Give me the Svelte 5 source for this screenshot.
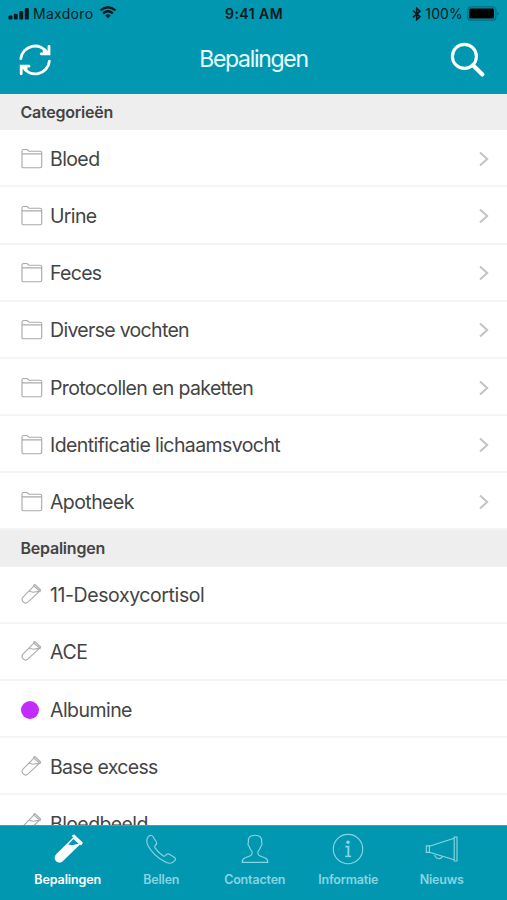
<script>
  const categories = [
    { label: 'Bloed', ls: -0.6 },
    { label: 'Urine', ls: -0.65 },
    { label: 'Feces', ls: -0.7 },
    { label: 'Diverse vochten', ls: -0.69 },
    { label: 'Protocollen en paketten', ls: -0.64 },
    { label: 'Identificatie lichaamsvocht', ls: -0.59 },
    { label: 'Apotheek', ls: -0.58 }
  ];
  const tests = [
    { label: '11-Desoxycortisol', ls: -0.41 },
    { label: 'ACE', ls: -0.35 },
    { label: 'Albumine', ls: -0.55, dot: true },
    { label: 'Base excess', ls: -0.68 },
    { label: 'Bloedbeeld', ls: -0.6 }
  ];
  const tabs = ['Bepalingen', 'Bellen', 'Contacten', 'Informatie', 'Nieuws'];
</script>

<div class="screen">
  <header>
    <div class="status">
      <div class="carrier">
        <svg width="22" height="14" viewBox="0 0 22 14"><rect x="0.5" y="8.5" width="3.9" height="4" rx="1"/><rect x="5.8" y="6.7" width="3.9" height="5.8" rx="1"/><rect x="11.2" y="4" width="4" height="8.5" rx="1"/><rect x="16.8" y="1" width="4" height="11.5" rx="1"/></svg>
        <span>Maxdoro</span>
        <svg class="wifi" width="18" height="13" viewBox="0 0 18 13"><path d="M1.5 4.4Q9-2 16.5 4.4M4.2 7.4Q9 3.2 13.8 7.4" fill="none" stroke="#06191d" stroke-width="2.3"/><path d="M6.3 9.4Q9 7 11.7 9.4L9 12.3Z"/></svg>
      </div>
      <span class="time">9:41 AM</span>
      <div class="power">
        <svg width="10" height="14" viewBox="0 0 10 14"><path d="M1 3.7 8 9.8 4.7 12.7V1.3L8 4.2 1 10.3" fill="none" stroke="#06191d" stroke-width="1.6"/></svg>
        <span>100%</span>
        <svg class="battery" width="33" height="15" viewBox="0 0 33 15"><rect x="0.8" y="0.8" width="28" height="13.4" rx="3" fill="none" stroke="#046d80" stroke-width="1.3"/><rect x="2.3" y="2.6" width="24.7" height="9.8" rx="1.2" fill="#000"/><path d="M30.2 5.5q3 2 0 4z" fill="#046d80"/></svg>
      </div>
    </div>
    <div class="nav">
      <svg width="34" height="34" viewBox="0 0 34 34" fill="none" stroke="#fff" stroke-width="2.8" stroke-linecap="round"><path d="M2.8 15.6A14.3 14.3 0 0 1 29.4 10.2M31.4 18.2A14.3 14.3 0 0 1 4.8 23.8"/><path d="M31 3.4V10.8H23.2M30.4 10.4 26 8.2M3.2 30.8V23.2H11M3.8 23.6 8.2 25.8"/></svg>
      <h1>Bepalingen</h1>
      <svg width="36" height="36" viewBox="0 0 36 36" fill="none" stroke="#fff"><circle cx="14.4" cy="14.4" r="12" stroke-width="3.1"/><path d="M23 23.2 32.4 32.4" stroke-width="4.2" stroke-linecap="round"/></svg>
    </div>
  </header>

  <main>
    <h2>Categorieën</h2>
    {#each categories as row}
      <div class="row">
        <svg class="icon" width="22" height="22" viewBox="0 0 22 22" fill="none" stroke="#ababab" stroke-width="1.15"><path d="M1 18.5V3.2Q1 1.5 2.6 1.5H6L8 3.2H19.2Q20.7 3.2 20.7 4.7V18.3Q20.7 19.7 19.2 19.7H2.5Q1 19.7 1 18.2M1 5.9H20.7"/></svg>
        <span style="letter-spacing:{row.ls}px">{row.label}</span>
        <svg class="chevron" width="12" height="16" viewBox="0 0 12 16"><path d="M2 1.5 9.2 8 2 14.5" fill="none" stroke="#c3c3c3" stroke-width="2"/></svg>
      </div>
    {/each}
    <h2>Bepalingen</h2>
    {#each tests as row}
      <div class="row">
        {#if row.dot}
          <span class="icon dot"></span>
        {:else}
          <svg class="icon" width="22" height="22" viewBox="0 0 22 22" fill="none" stroke="#adadad" stroke-width="1.15"><path d="M12.8 2.1 2 13.2C-.6 16.4 3.6 20.8 6.8 18.1L18.4 7.3M12.7 1.1 14 .6 19.6 6 19 7.5 12.6 1.7ZM8.2 7.3 12 8.2 18 7.4"/></svg>
        {/if}
        <span style="letter-spacing:{row.ls}px">{row.label}</span>
      </div>
    {/each}
  </main>

  <nav class="tabs">
    {#each tabs as tab, i}
      <div class="tab" class:active={i === 0}>
        <svg width="36" height="34" viewBox="0 0 36 34" fill="none" stroke="currentColor" stroke-width="1.15">
          {#if i === 0}
            <path d="M23.2 4.5 6.4 20.9C1.5 25.8 8.2 32.6 13 28L30 11.5Z" fill="currentColor" stroke="none"/>
            <path d="M22.6 3 24 2 32.2 9.9 31 11.5Z" fill="currentColor"/>
            <path d="M23.4 6 18.4 11.4Q22 12.6 25 11.5L29 10.7Z" fill="#0297b1" stroke="none"/>
            <path d="m25 6.4 4 3.8" stroke-width="1.2"/>
          {:else if i === 1}
            <path d="M5.8 3.2C7.4 1.8 8.8 2 9.8 3.5L13.3 8.8C14.5 10.7 13.3 11.5 12.2 12.5Q11 13.5 12.2 15.1Q15.4 19.7 20 22.7Q21.4 23.7 22.6 22.4C24 20.6 25 20.2 26.8 21.4L31.2 24.3C33 25.5 32.8 26.7 31.3 28.2Q27.3 32.1 21.5 28.6Q9.8 21.8 5 12.4Q2.2 6.8 5.8 3.2Z"/>
          {:else if i === 2}
            <path d="M18 2.2C13 2.2 11 4.5 11.4 9.5Q10.2 11.5 12.4 13.8Q13 16.2 14.4 17.6C15.8 19 15 22 13.4 22.7L8.3 24.8Q5 26 5.2 29.4H30.8Q31 26 27.7 24.8L22.6 22.7C21 22 20.2 19 21.6 17.6Q23 16.2 23.6 13.8Q25.8 11.5 24.6 9.5C25 4.5 23 2.2 18 2.2Z"/>
          {:else if i === 3}
            <circle cx="18" cy="16" r="14.7"/>
            <circle cx="18" cy="9.2" r="1.8" fill="currentColor" stroke="none"/>
            <path d="M15.4 13.6H18.4V23" stroke-width="1.9"/>
            <path d="M15.2 23.4H21.2" stroke-width="1.5"/>
          {:else}
            <path d="M2.3 12.8H5.4V19.4H2.3ZM5.4 13.2 30.2 5.2M5.4 19.2 30.2 26.8M30.2 4.1H33V28H30.2ZM10.5 20.7C10.9 26.5 17.3 26.8 18.3 23.1"/>
          {/if}
        </svg>
        <span>{tab}</span>
      </div>
    {/each}
  </nav>
</div>

<style>
  :global(body) { margin: 0; }
  .screen {
    width: 507px;
    height: 900px;
    display: flex;
    flex-direction: column;
    overflow: hidden;
    background: #fff;
    color: #444;
    font-family: Inter, "Liberation Sans", sans-serif;
  }
  header { flex: none; height: 94px; background: #0297b1; }
  .status {
    height: 28px;
    box-sizing: border-box;
    padding: 0 7px 1px 8px;
    display: grid;
    grid-template-columns: 1fr auto 1fr;
    align-items: center;
    color: #06191d;
    fill: #06191d;
    font-size: 14px;
  }
  .carrier, .power { display: flex; align-items: center; }
  .carrier span { margin-left: 3px; letter-spacing: 0.3px; }
  .wifi { margin-left: 6px; margin-top: -2px; }
  .time { font-weight: 600; letter-spacing: 0.45px; }
  .power { justify-content: flex-end; }
  .power span { margin: 0 4px 0 3px; letter-spacing: 0.15px; }
  .nav {
    height: 64px;
    padding: 0 21px 0 18px;
    display: flex;
    align-items: center;
    justify-content: space-between;
  }
  h1 { margin: -2px 0 0 5px; color: #e6ffff; font-size: 23px; font-weight: 400; letter-spacing: -1.3px; }
  main { flex: 1; min-height: 0; overflow: hidden; }
  h2 {
    height: 36.3px;
    margin: 0;
    padding-left: 20.5px;
    display: flex;
    align-items: center;
    background: #eee;
    font-size: 16px;
    font-weight: 600;
    letter-spacing: -0.23px;
  }
  .row {
    height: 57.15px;
    box-sizing: border-box;
    padding: 2.4px 17px 0 21px;
    display: flex;
    align-items: center;
    border-bottom: 2px solid #f4f4f4;
    font-size: 19.5px;
    white-space: nowrap;
  }
  .icon { flex: none; margin-right: 7px; }
  .dot { width: 18px; height: 18px; margin-right: 11px; border-radius: 50%; background: #c22dfb; }
  .chevron { margin-left: auto; }
  .tabs {
    flex: none;
    height: 75.5px;
    box-sizing: border-box;
    border-top: 1px solid #2ba8bd;
    padding: 0 18.5px 0 21px;
    display: flex;
    background: #0297b1;
  }
  .tab {
    flex: 1;
    display: flex;
    flex-direction: column;
    align-items: center;
    padding-top: 7px;
    color: #86d5e2;
    font-size: 12.5px;
    font-weight: 600;
    letter-spacing: -0.17px;
  }
  .tab span { margin-top: 5px; line-height: 16px; }
  .active { color: #fff; letter-spacing: -0.1px; }
</style>
